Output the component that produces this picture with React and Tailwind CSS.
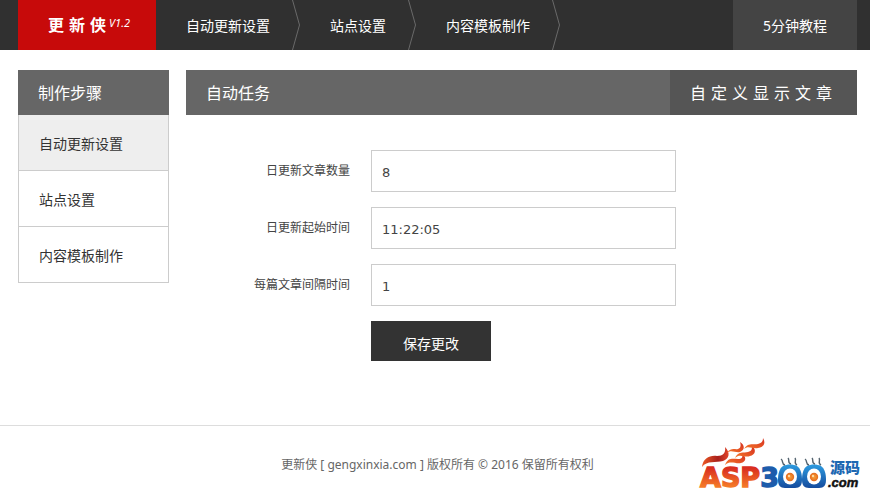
import React from 'react';

const navItems = ['自动更新设置', '站点设置', '内容模板制作'];

const fields = [
  { id: 'count', label: '日更新文章数量', value: '8' },
  { id: 'start', label: '日更新起始时间', value: '11:22:05' },
  { id: 'interval', label: '每篇文章间隔时间', value: '1' },
];

const Header = () => (
  <header className="flex h-[50px] bg-[#303030] pl-[18px] pr-[13px] text-sm leading-[52px] text-white">
    <a href="#home" className="flex w-[138px] shrink-0 bg-[#c70a0a] pl-[30px] whitespace-nowrap">
      <b className="text-base leading-[50px] tracking-[5px]">更新侠</b>
      <i className="-ml-0.5 text-[11px] leading-[46px]">V1.2</i>
    </a>
    <nav className="flex flex-1">
      {navItems.map((item) => (
        <a key={item} href="#nav" className="flex justify-between gap-[22px] pl-[30px] whitespace-nowrap">
          {item}
          <svg width="8" height="50" viewBox="0 0 8 50" fill="none" stroke="#6a6a6a">
            <path d="M0.5 0L7.5 25L0.5 50" />
          </svg>
        </a>
      ))}
    </nav>
    <a href="#tutorial" className="bg-[#444] px-[30px] whitespace-nowrap">5分钟教程</a>
  </header>
);

const Sidebar = () => (
  <aside className="w-[151px] shrink-0">
    <h2 className="h-[45px] bg-[#666] pl-5 text-base leading-[46px] text-white">制作步骤</h2>
    <ul className="border-x border-[#ccc] text-sm text-[#333]">
      {navItems.map((item, index) => (
        <li key={item} className={index === 0 ? 'border-b border-[#ccc] bg-[#eee]' : 'border-b border-[#ccc]'}>
          <a href="#step" className="block h-[55px] pl-5 leading-[58px]">{item}</a>
        </li>
      ))}
    </ul>
  </aside>
);

const TaskForm = () => (
  <form className="flex flex-col gap-[15px] pt-[35px]" onSubmit={(e) => e.preventDefault()}>
    {fields.map((field) => (
      <div key={field.id} className="flex gap-[21px]">
        <label htmlFor={field.id} className="w-[164px] shrink-0 text-right text-xs leading-[42px] text-[#444]">
          {field.label}
        </label>
        <input
          id={field.id}
          type="text"
          defaultValue={field.value}
          className="h-[42px] w-full max-w-[305px] border border-[#ccc] px-2.5 pt-0.5 font-['DejaVu_Sans',sans-serif] text-[13px] text-[#444] outline-none"
        />
      </div>
    ))}
    <button type="submit" className="ml-[185px] h-10 w-[120px] bg-[#333] pt-1.5 text-sm text-white">
      保存更改
    </button>
  </form>
);

// One fried-egg zero with three wisps of steam
const EggZero = ({ x }) => (
  <g transform={`translate(${x} 0)`}>
    <path
      d="M5 30C9 28 15 28 19 30C23 33 24 38 24 44C24 49 22 52 17 52H7C2 52 0 49 0 44C0 38 1 33 5 30Z"
      fill="url(#blue)"
    />
    <ellipse cx="12" cy="40.5" rx="7" ry="8" fill="#fff" />
    <circle cx="12" cy="41" r="4.2" fill="url(#yolk)" />
    <circle cx="11" cy="40" r="1.2" fill="#ffd9a0" />
    <path
      d="M7 29C3 28 6 25 3 23M13 28C9 27 12 24 10 22M19 29C15 27 19 25 17 22"
      fill="none"
      stroke="#53636f"
      strokeWidth="1.4"
    />
  </g>
);

const SiteLogo = () => (
  <svg width="164" height="56" viewBox="0 0 164 56" role="img" aria-label="ASP300源码.com">
    <defs>
      <linearGradient id="fire" x1="0" y1="0" x2="0" y2="1">
        <stop offset="0.2" stopColor="#d92e20" />
        <stop offset="0.8" stopColor="#f57a28" />
      </linearGradient>
      <linearGradient id="flame" x1="0" y1="1" x2="1" y2="0">
        <stop offset="0" stopColor="#f5792a" />
        <stop offset="1" stopColor="#d62f20" />
      </linearGradient>
      <linearGradient id="ember" x1="0" y1="0" x2="1" y2="0">
        <stop offset="0" stopColor="#ee5a24" />
        <stop offset="0.6" stopColor="#a8201c" />
        <stop offset="1" stopColor="#e2452a" />
      </linearGradient>
      <linearGradient id="blue" x1="0" y1="0" x2="0" y2="1">
        <stop offset="0" stopColor="#2d9be0" />
        <stop offset="1" stopColor="#154c9e" />
      </linearGradient>
      <radialGradient id="yolk">
        <stop offset="0" stopColor="#f7a13a" />
        <stop offset="1" stopColor="#e56a1c" />
      </radialGradient>
    </defs>
    <path d="M4 31C5 22 12 19 19 20C25 20 28 17 27 11C33 17 31 23 25 25C18 27 9 24 4 31Z" fill="url(#ember)" />
    <g fill="url(#flame)">
      <path d="M29 17C33 11 37 14 40 13C43 12 43 9 42 6C47 9 47 14 42 16C37 17 33 13 29 17Z" />
      <path d="M27 29C30 21 35 23 40 23C44 23 45 21 44 18C49 21 48 26 43 27C37 28 32 24 27 29Z" />
      <path d="M37 22C40 15 46 17 50 16C54 15 54 13 54 10C59 14 57 19 52 20C46 22 42 17 37 22Z" />
      <path d="M46 13C50 6 55 9 60 8C64 7 65 5 65 2C68 7 66 11 60 12C54 13 50 9 46 13Z" />
    </g>
    <text
      x="2"
      y="51"
      fontFamily="DejaVu Sans, sans-serif"
      fontSize="27"
      fontWeight="700"
      fill="url(#fire)"
      stroke="url(#fire)"
      strokeWidth="1.4"
    >
      ASP
      <tspan fill="#1d5cab" stroke="#1d5cab">3</tspan>
    </text>
    <EggZero x={80} />
    <EggZero x={104} />
    <text x="132" y="37" fontFamily="Noto Sans CJK SC, sans-serif" fontSize="15" fontWeight="900" fill="#1d68b2">
      源码
    </text>
    <text
      x="130"
      y="51"
      fontFamily="Liberation Sans, Arial, sans-serif"
      fontSize="13"
      fontWeight="700"
      fontStyle="italic"
      fill="#111"
      stroke="#111"
      strokeWidth="0.5"
    >
      .com
    </text>
  </svg>
);

export default function App() {
  return (
    <div className="bg-white font-['Noto_Sans','Noto_Sans_CJK_SC',sans-serif]">
      <Header />
      <main className="flex gap-[17px] pt-5 pr-[13px] pl-[18px]">
        <Sidebar />
        <section className="min-w-0 flex-1">
          <div className="flex h-[45px] justify-between bg-[#666] pl-5 text-base leading-[46px] text-white">
            <h1>自动任务</h1>
            <a href="#articles" className="bg-[#555] px-5 tracking-[5px]">自定义显示文章</a>
          </div>
          <TaskForm />
        </section>
      </main>
      <footer className="relative mt-16 border-t border-[#ddd] pt-[29px] pr-[13px] pb-[17px] pl-[18px] text-center text-xs leading-5 text-[#666]">
        更新侠 [ gengxinxia.com ] 版权所有 © 2016 保留所有权利
        <a href="#asp300" className="absolute right-2 bottom-0">
          <SiteLogo />
        </a>
      </footer>
    </div>
  );
}
